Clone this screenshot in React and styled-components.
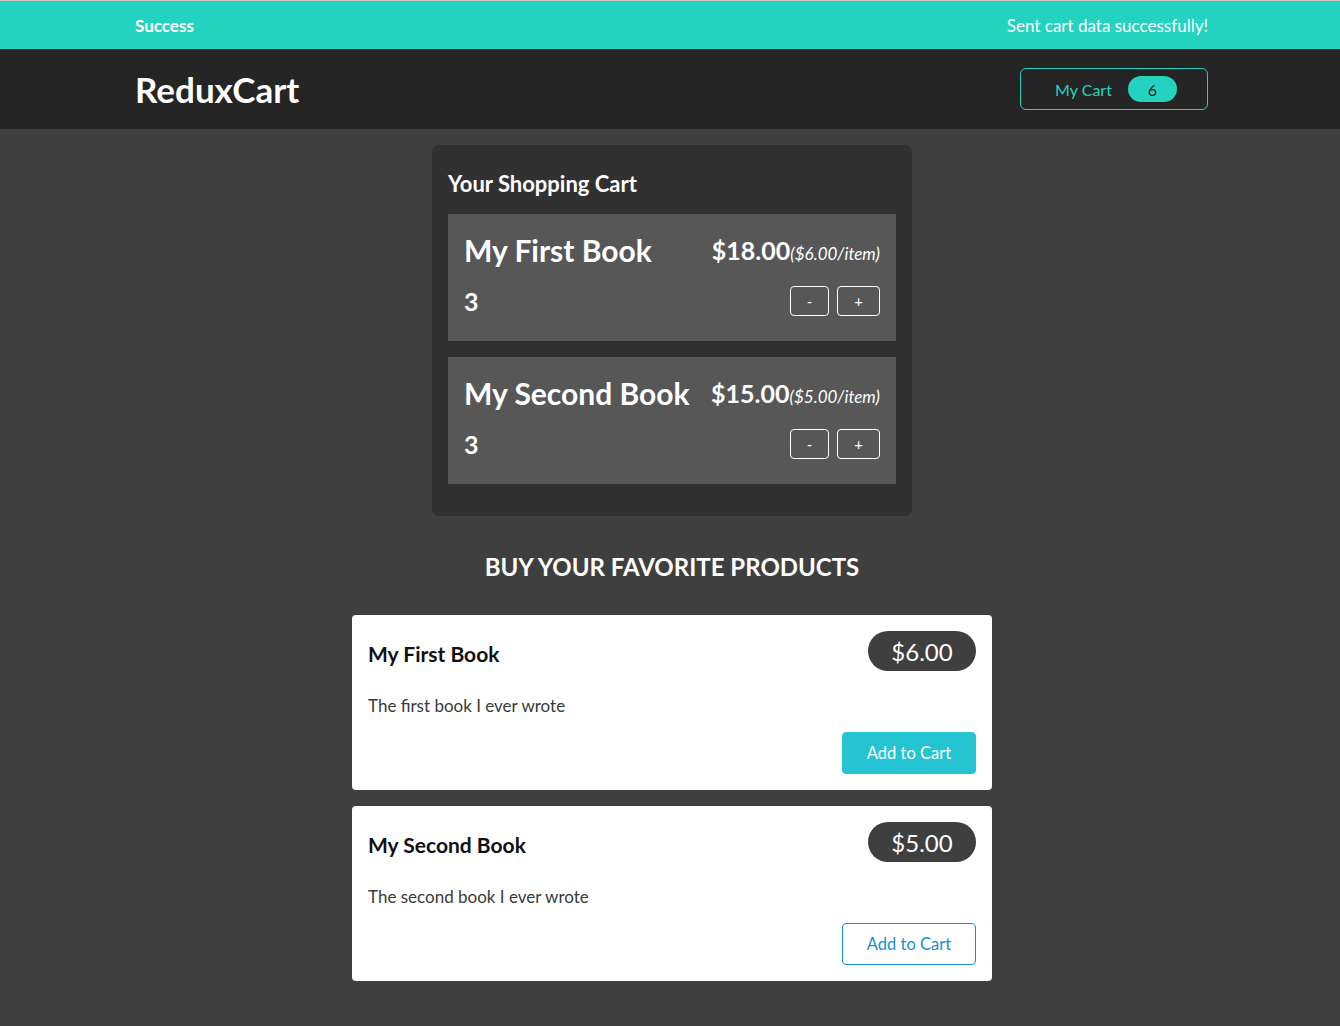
import React from "react";
import styled, { createGlobalStyle } from "styled-components";

const GlobalStyle = createGlobalStyle`
  * {
    box-sizing: border-box;
  }
  body {
    margin: 0;
    font-family: Lato, "Noto Sans", sans-serif;
    background-color: #3f3f3f;
  }
`;

const Notification = styled.section`
  width: 100%;
  height: 49px;
  background-color: #23d3bf;
  border-top: 1px solid #c9c9c9;
  display: flex;
  justify-content: space-between;
  align-items: center;
  padding: 0 132px 0 135px;
  color: #fff;
`;

const NoteTitle = styled.h2`
  margin: 0;
  font-size: 17px;
  font-weight: 700;
`;

const NoteMessage = styled.p`
  margin: 0;
  font-size: 17px;
`;

const Header = styled.header`
  width: 100%;
  height: 80px;
  background-color: #252525;
  padding: 0 132px 0 135px;
  display: flex;
  justify-content: space-between;
  align-items: center;
`;

const Logo = styled.h1`
  margin: 0;
  color: #fff;
  font-size: 35px;
  font-weight: 700;
`;

const CartButton = styled.button`
  width: 188px;
  height: 42px;
  background: transparent;
  border: 1px solid #23d3bf;
  border-radius: 6px;
  color: #23d3bf;
  font-family: inherit;
  font-size: 16px;
  display: flex;
  align-items: center;
  justify-content: center;
  gap: 16px;
  padding: 0 0 0 4px;
`;

const Badge = styled.span`
  background-color: #23d3bf;
  color: #1e1e1e;
  border-radius: 30px;
  width: 49px;
  height: 26px;
  display: flex;
  align-items: center;
  justify-content: center;
  font-size: 16px;
`;

const Main = styled.main`
  padding: 16px 0 44px 4px;
  display: flex;
  flex-direction: column;
  align-items: center;
`;

const CartPanel = styled.section`
  width: 480px;
  background-color: #313131;
  border-radius: 6px;
  padding: 24px 16px 32px;
  color: #fff;
`;

const CartTitle = styled.h2`
  margin: 0 0 15px;
  font-size: 22px;
  font-weight: 700;
  line-height: 30px;
`;

const CartList = styled.ul`
  list-style: none;
  margin: 0;
  padding: 0;
  display: flex;
  flex-direction: column;
  gap: 16px;
`;

const CartItem = styled.li`
  height: 127px;
  background-color: #575757;
  padding: 17px 16px 0;
`;

const ItemRow = styled.div`
  display: flex;
  justify-content: space-between;
  align-items: center;
  margin-top: ${(p) => p.$gap || 0}px;
`;

const ItemName = styled.h3`
  margin: 0;
  font-size: 30px;
  font-weight: 700;
  line-height: 38px;
`;

const ItemPrice = styled.div`
  font-size: 25px;
  font-weight: 700;
`;

const PerItem = styled.span`
  font-size: 17px;
  font-weight: 400;
  font-style: italic;
`;

const Quantity = styled.span`
  font-size: 25px;
  font-weight: 700;
`;

const Actions = styled.div`
  display: flex;
  gap: 8px;
`;

const QtyButton = styled.button`
  width: ${(p) => p.$w}px;
  height: 30px;
  background: transparent;
  border: 1px solid #fff;
  border-radius: 4px;
  color: #fff;
  font-family: inherit;
  font-size: 15px;
  padding: 0;
`;

const ProductsTitle = styled.h2`
  margin: 31px 0 28px;
  color: #fff;
  font-size: 24px;
  font-weight: 700;
  text-transform: uppercase;
  line-height: 40px;
`;

const ProductList = styled.ul`
  list-style: none;
  margin: 0;
  padding: 0;
  width: 640px;
  display: flex;
  flex-direction: column;
  gap: 16px;
`;

const ProductCard = styled.li`
  height: 175px;
  background-color: #fff;
  border-radius: 4px;
  padding: 16px;
  display: flex;
  flex-direction: column;
`;

const ProductHead = styled.div`
  display: flex;
  justify-content: space-between;
  align-items: center;
`;

const ProductName = styled.h3`
  margin: 0;
  padding-top: 5px;
  font-size: 21px;
  font-weight: 700;
  color: #111;
`;

const PricePill = styled.div`
  background-color: #3f3f3f;
  color: #fff;
  border-radius: 30px;
  width: 108px;
  height: 40px;
  display: flex;
  align-items: center;
  justify-content: center;
  font-size: 24px;
`;

const Description = styled.p`
  margin: 24px 0 0;
  font-size: 17px;
  color: #3a3a3a;
`;

const ProductActions = styled.div`
  margin-top: auto;
  display: flex;
  justify-content: flex-end;
`;

const AddButton = styled.button`
  width: 134px;
  height: 42px;
  border-radius: 4px;
  font-family: inherit;
  font-size: 16.5px;
  border: 1px solid ${(p) => (p.$filled ? "#25c4d2" : "#1a8ed1")};
  background-color: ${(p) => (p.$filled ? "#25c4d2" : "#fff")};
  color: ${(p) => (p.$filled ? "#fff" : "#1a8ed1")};
`;

const cartItems = [
  { id: "p1", title: "My First Book", quantity: 3, price: 6 },
  { id: "p2", title: "My Second Book", quantity: 3, price: 5 },
];

const products = [
  { id: "p1", title: "My First Book", price: 6, description: "The first book I ever wrote" },
  { id: "p2", title: "My Second Book", price: 5, description: "The second book I ever wrote" },
];

const App = () => {
  return (
    <>
      <GlobalStyle />
      <Notification>
        <NoteTitle>Success</NoteTitle>
        <NoteMessage>Sent cart data successfully!</NoteMessage>
      </Notification>
      <Header>
        <Logo>ReduxCart</Logo>
        <CartButton>
          <span>My Cart</span>
          <Badge>6</Badge>
        </CartButton>
      </Header>
      <Main>
        <CartPanel>
          <CartTitle>Your Shopping Cart</CartTitle>
          <CartList>
            {cartItems.map((item) => (
              <CartItem key={item.id}>
                <ItemRow>
                  <ItemName>{item.title}</ItemName>
                  <ItemPrice>
                    ${(item.quantity * item.price).toFixed(2)}
                    <PerItem>(${item.price.toFixed(2)}/item)</PerItem>
                  </ItemPrice>
                </ItemRow>
                <ItemRow $gap={17}>
                  <Quantity>{item.quantity}</Quantity>
                  <Actions>
                    <QtyButton $w={39}>-</QtyButton>
                    <QtyButton $w={43}>+</QtyButton>
                  </Actions>
                </ItemRow>
              </CartItem>
            ))}
          </CartList>
        </CartPanel>
        <ProductsTitle>Buy your favorite products</ProductsTitle>
        <ProductList>
          {products.map((p, i) => (
            <ProductCard key={p.id}>
              <ProductHead>
                <ProductName>{p.title}</ProductName>
                <PricePill>${p.price.toFixed(2)}</PricePill>
              </ProductHead>
              <Description>{p.description}</Description>
              <ProductActions>
                <AddButton $filled={i === 0}>Add to Cart</AddButton>
              </ProductActions>
            </ProductCard>
          ))}
        </ProductList>
      </Main>
    </>
  );
};

export default App;
